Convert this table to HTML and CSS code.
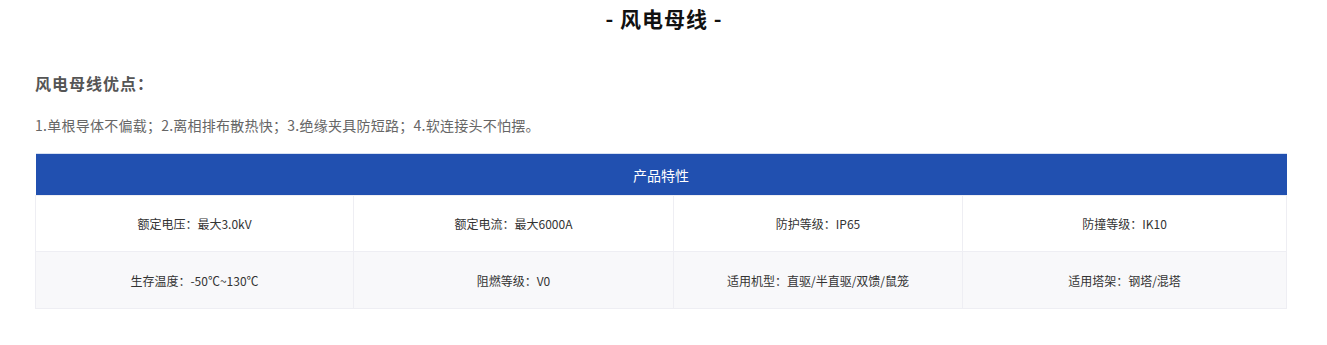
FILE: index.html
```html
<!DOCTYPE html>
<html lang="zh-CN">
<head>
  <meta charset="UTF-8" />
  <meta name="viewport" content="width=device-width, initial-scale=1.0"/>
  <title>风电母线</title>
  <link rel="stylesheet" href="styles.css">
</head>
<body>
  <div class="produto">
    <h1 class="titulo">- 风电母线 -</h1>

    <h2 class="subtitulo">风电母线优点：</h2>
    <p class="resumo">1.单根导体不偏载；2.离相排布散热快；3.绝缘夹具防短路；4.软连接头不怕摆。</p>

    <table class="specs">
      <colgroup>
        <col class="c1" />
        <col class="c2" />
        <col class="c3" />
        <col class="c4" />
      </colgroup>
      <thead>
        <tr>
          <th colspan="4">产品特性</th>
        </tr>
      </thead>
      <tbody>
        <tr>
          <td>额定电压：最大3.0kV</td>
          <td>额定电流：最大6000A</td>
          <td>防护等级：IP65</td>
          <td>防撞等级：IK10</td>
        </tr>
        <tr class="par">
          <td>生存温度：-50℃~130℃</td>
          <td>阻燃等级：V0</td>
          <td>适用机型：直驱/半直驱/双馈/鼠笼</td>
          <td>适用塔架：钢塔/混塔</td>
        </tr>
      </tbody>
    </table>
  </div>
</body>
</html>
```

FILE: styles.css
```css
body {
  font-family: "Microsoft YaHei", "Noto Sans CJK SC", "Noto Sans", sans-serif;
  background-color: #fff;
  color: #333;
  margin: 0;
}

.produto {
  padding: 3px 40px 0 35px;
}

.titulo {
  margin: 0;
  font-size: 21px;
  line-height: 30px;
  font-weight: bold;
  color: #111;
  text-align: center;
  letter-spacing: 1px;
  padding-left: 6px;
}

.subtitulo {
  margin: 38px 0 0;
  font-size: 16px;
  line-height: 24px;
  font-weight: bold;
  color: #555;
  letter-spacing: 1px;
}

.resumo {
  margin: 20px 0 0;
  font-size: 14px;
  line-height: 20px;
  color: #666;
  letter-spacing: 0.25px;
}

.specs {
  width: 100%;
  margin-top: 18px;
  border-collapse: collapse;
  table-layout: fixed;
  font-size: 12px;
  color: #333;
}

.specs .c1 { width: 318px; }
.specs .c2 { width: 320px; }
.specs .c3 { width: 289px; }

.specs th {
  height: 41px;
  padding: 0;
  background-color: #2150b0;
  border-top: 1px solid #d6e0f2;
  color: #fff;
  font-size: 14px;
  font-weight: normal;
  text-align: center;
}

.specs td {
  height: 55px;
  padding: 0;
  text-align: center;
  border: 1px solid #eeeef3;
  background-color: #fff;
}

.specs .par td {
  height: 56px;
  background-color: #f8f8fa;
}
```
